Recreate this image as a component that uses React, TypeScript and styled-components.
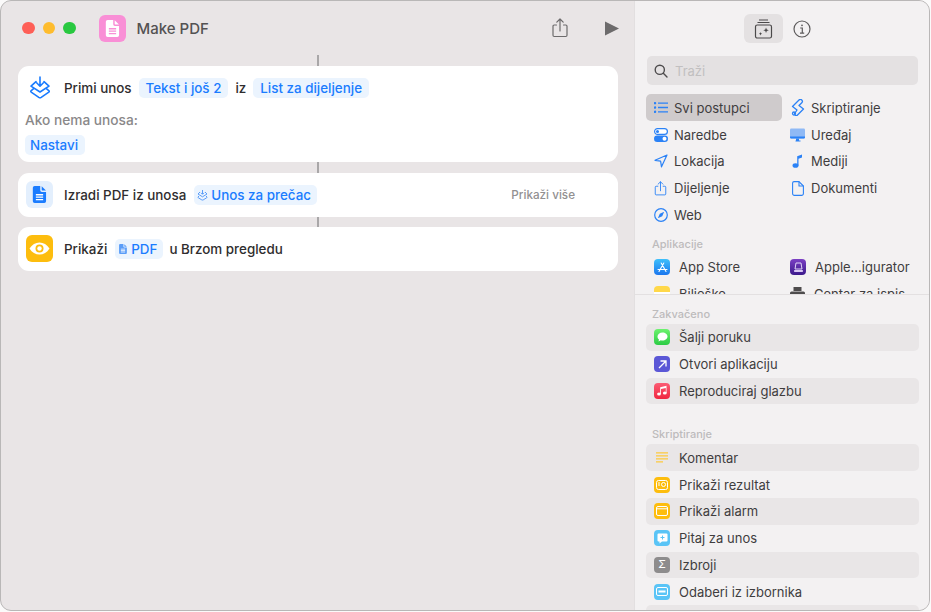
import React from 'react';
import styled, { createGlobalStyle } from 'styled-components';

const GlobalStyle = createGlobalStyle`
  html, body {
    margin: 0;
    padding: 0;
    width: 931px;
    height: 612px;
    overflow: hidden;
    background: #fbfafa;
  }
  * { box-sizing: border-box; }
`;

const Window = styled.div`
  width: 930px;
  height: 611px;
  display: flex;
  overflow: hidden;
  border: 1px solid #b9b7b7;
  border-radius: 11px;
  background: #e9e5e6;
  font-family: Inter, "Liberation Sans", sans-serif;
  font-size: 13px;
  color: #3f3d3e;
`;

const Editor = styled.main`
  width: 633px;
  flex: none;
  display: flex;
  flex-direction: column;
`;

const TitleBar = styled.header`
  height: 54px;
  flex: none;
  display: flex;
  align-items: center;
  padding: 0 15px 0 21px;
`;

const Light = styled.span<{ $color: string }>`
  width: 12.5px;
  height: 12.5px;
  margin-right: 8px;
  border-radius: 50%;
  background: ${p => p.$color};
`;

const AppIcon = styled.span`
  width: 27px;
  height: 27px;
  margin-left: 15px;
  border-radius: 6px;
  background: #f98fd6;
  display: flex;
  align-items: center;
  justify-content: center;
`;

const Title = styled.h1`
  margin: 0 0 0 11px;
  font-size: 15px;
  font-weight: 500;
  color: #545253;
`;

const ToolIcon = styled.span<{ $left?: number }>`
  display: flex;
  margin-left: ${p => (p.$left === undefined ? 'auto' : `${p.$left}px`)};
`;

const Canvas = styled.div`
  width: 600px;
  margin-left: 17px;
  display: flex;
  flex-direction: column;
  align-items: center;
`;

const Connector = styled.span<{ $h: number }>`
  width: 2px;
  height: ${p => p.$h}px;
  background: #a9a7a8;
`;

const Card = styled.section<{ $bottom?: number }>`
  width: 100%;
  background: #fff;
  border-radius: 11px;
  padding: 8px 8px ${p => p.$bottom ?? 8}px;
`;

const CardLine = styled.div`
  display: flex;
  align-items: center;
  height: 28px;
  padding-bottom: 1px;
  font-size: 13.4px;
  font-weight: 500;
  color: #2f2d2e;
`;

const ActionTile = styled.span<{ $bg: string }>`
  width: 27px;
  height: 27px;
  flex: none;
  margin-right: 11px;
  border-radius: 6px;
  background: ${p => p.$bg};
  display: flex;
  align-items: center;
  justify-content: center;
`;

const Pill = styled.span<{ $left: number; $right?: number }>`
  display: flex;
  width: fit-content;
  align-items: center;
  height: 20px;
  padding: 0 7px;
  margin-left: ${p => p.$left}px;
  margin-right: ${p => p.$right ?? 0}px;
  border-radius: 5px;
  background: #ebf4fe;
  color: #1a7cff;
  font-size: 13.4px;
  font-weight: 500;
`;

const IconPill = styled(Pill)`
  gap: 3px;
  padding: 0 6px 0 3px;
`;

const NoInputLabel = styled.div`
  margin: 10px 0 7px -1px;
  height: 16px;
  line-height: 16px;
  font-size: 13.7px;
  color: #8a8889;
  font-weight: 500;
`;

const NoInputPill = styled(Pill)`
  padding: 0 7px 0 5px;
  margin-left: -1px;
`;

const ShowMore = styled.span`
  margin-left: auto;
  margin-right: 35px;
  font-size: 11.7px;
  font-weight: 500;
  color: #929091;
`;

const Sidebar = styled.aside`
  flex: 1;
  display: flex;
  flex-direction: column;
  background: #f3f1f2;
  border-left: 1px solid #e2dfe0;
`;

const BrowseArea = styled.div`
  height: 294px;
  flex: none;
  overflow: hidden;
  padding: 0 9px 0 11px;
  border-bottom: 1px solid #e3e0e1;
`;

const SideTabs = styled.div`
  height: 55px;
  display: flex;
  align-items: center;
  justify-content: center;
  gap: 9px;
  padding-right: 10px;
`;

const SideTab = styled.span<{ $active?: boolean }>`
  width: ${p => (p.$active ? '39px' : '20px')};
  height: 29px;
  border-radius: 6px;
  background: ${p => (p.$active ? '#e4e1e2' : 'transparent')};
  display: flex;
  align-items: center;
  justify-content: center;
`;

const Search = styled.div`
  height: 29px;
  width: 271px;
  margin-left: 1px;
  border-radius: 5px;
  background: #e4e1e2;
  display: flex;
  align-items: center;
  gap: 7px;
  padding-left: 7px;
  color: #c1bfc0;
`;

const CategoryGrid = styled.div`
  margin-top: 9px;
  display: grid;
  grid-template-columns: 136px 1fr;
  column-gap: 1px;
  grid-auto-rows: 26.8px;
`;

const Category = styled.div<{ $active?: boolean }>`
  display: flex;
  align-items: center;
  gap: 6px;
  padding: 1px 0 0 7px;
  border-radius: 5px;
  background: ${p => (p.$active ? '#cfcbcc' : 'transparent')};
`;

const GlyphBox = styled.span`
  width: 15px;
  height: 15px;
  flex: none;
  display: flex;
  align-items: center;
  justify-content: center;
`;

const SectionLabel = styled.div<{ $top: number }>`
  margin: ${p => p.$top}px 0 0 6px;
  height: 14px;
  line-height: 14px;
  font-size: 11px;
  font-weight: 500;
  color: #bdbbbc;
`;

const AppGrid = styled.div`
  margin-top: 3px;
  display: grid;
  grid-template-columns: 135px 1fr;
  column-gap: 1px;
  grid-auto-rows: 26.8px;
`;

const AppRow = styled.div`
  display: flex;
  align-items: center;
  gap: 9px;
  padding-left: 8px;
`;

const PinnedArea = styled.div`
  flex: 1;
  min-height: 0;
  overflow: hidden;
  padding: 12px 9px 0 11px;
`;

const ActionList = styled.div<{ $bottom?: number }>`
  margin-top: 3px;
  margin-bottom: ${p => p.$bottom ?? 0}px;
`;

const ActionRow = styled.div<{ $striped?: boolean }>`
  height: 26.8px;
  width: 273px;
  display: flex;
  align-items: center;
  gap: 9px;
  padding-left: 8px;
  border-radius: 5px;
  background: ${p => (p.$striped ? '#e9e6e7' : 'transparent')};
`;

const Tile = styled.span<{ $bg: string }>`
  width: 16px;
  height: 16px;
  flex: none;
  border-radius: 4px;
  background: ${p => p.$bg};
  display: flex;
  align-items: center;
  justify-content: center;
`;

const BLUE = '#2b82f6';

const DocGlyph = ({ size = 14, color = '#fff', ink = '#f98fd6' }: { size?: number; color?: string; ink?: string }) => (
  <svg width={size} height={size} viewBox="0 0 14 14">
    <path d="M3 0h4.600v3.600a1.400 1.400 0 0 0 1.400 1.400h3.400v7.500A1.500 1.500 0 0 1 10.900 14H3a1.500 1.500 0 0 1-1.500-1.500v-11A1.500 1.500 0 0 1 3 0z" fill={color} />
    <path d="M8.800 0.300 12.300 3.800H9.600a.8.800 0 0 1-.8-.8z" fill={color} />
    <path d="M4 7.200h6M4 9.200h6M4 11.200h6" stroke={ink} strokeWidth="1.100" />
  </svg>
);

const InputGlyph = () => (
  <svg width="22" height="24" viewBox="0 0 22 24" fill="none" stroke="#1a7cff" strokeWidth="1.600" strokeLinejoin="round" strokeLinecap="round">
    <path d="M11 1v9M7.600 6.800 11 10.200l3.400-3.400" />
    <path d="M7 5.600 2 10.200l9 5.800 9-5.800-5-4.600" />
    <path d="M4.600 12.600 2 14.800c-.4.500-.3 1 .2 1.400l7.600 5.200c.8.500 1.600.500 2.400 0l7.600-5.200c.5-.4.600-.9.200-1.400l-2.600-2.200" />
  </svg>
);

const ShareGlyph = ({ size = 20, color = '#6d6b6c' }: { size?: number; color?: string }) => (
  <svg width={size} height={size} viewBox="0 0 20 20" fill="none" stroke={color} strokeWidth="1.200" strokeLinecap="round" strokeLinejoin="round">
    <path d="M6.500 7H4.200A1.200 1.200 0 0 0 3 8.200v9.100a1.200 1.200 0 0 0 1.200 1.200h11.600a1.200 1.200 0 0 0 1.200-1.200V8.200A1.200 1.200 0 0 0 15.800 7h-2.300" />
    <path d="M10 13V1.200M6.800 4.200 10 1l3.200 3.200" />
  </svg>
);

const EyeGlyph = () => (
  <svg width="21" height="13" viewBox="0 0 21 13">
    <path d="M.5 6.500C3 2.500 6.500.5 10.500.5s7.500 2 10 6c-2.500 4-6 6-10 6s-7.500-2-10-6z" fill="#fff" />
    <circle cx="10.500" cy="6.500" r="4" fill="#fdbd0e" />
    <circle cx="10.500" cy="6.500" r="2.200" fill="#fff" />
  </svg>
);

const ShortcutGlyph = () => (
  <svg width="11" height="12" viewBox="0 0 11 12" fill="none" stroke="#5a9df8" strokeWidth="1" strokeLinejoin="round">
    <path d="M5.500 1v4M4 3.800l1.500 1.500L7 3.800" />
    <path d="M3 3 1 5l4.500 2.800L10 5 8 3" />
    <path d="M2 7 1 8c-.2.300 0 .5.200.7l3.600 2.200c.5.200.9.200 1.400 0l3.600-2.200c.2-.2.4-.4.200-.7L9 7" />
  </svg>
);

const TabLibraryGlyph = () => (
  <svg width="19" height="20" viewBox="0 0 19 20" fill="none" stroke="#4b494a" strokeWidth="1.200">
    <path d="M5 1h9" />
    <path d="M3.500 3.500h12" />
    <rect x="1.500" y="6" width="16" height="13" rx="1.800" />
    <path d="M12 8.500l.8 2 2 .7-2 .8-.8 2-.7-2-2-.8 2-.7zM6.500 13l.5 1.200 1.200.5-1.200.5-.5 1.200-.5-1.200-1.200-.5 1.200-.5z" fill="#4b494a" stroke="none" />
  </svg>
);

const InfoGlyph = () => (
  <svg width="18" height="18" viewBox="0 0 18 18" fill="none" stroke="#5c5a5b" strokeWidth="1.200">
    <circle cx="9" cy="9" r="8" />
    <circle cx="9" cy="5.300" r=".9" fill="#5c5a5b" stroke="none" />
    <path d="M7.200 8h2.100v5M7 13.200h4.200" />
  </svg>
);

const SearchGlyph = () => (
  <svg width="14" height="14" viewBox="0 0 14 14" fill="none" stroke="#4e4c4d" strokeWidth="1.400" strokeLinecap="round">
    <circle cx="5.800" cy="5.800" r="4.600" />
    <path d="M9.300 9.300 13 13" />
  </svg>
);

const ListGlyph = () => (
  <svg width="14" height="11" viewBox="0 0 14 11" stroke={BLUE} strokeWidth="1.300" fill={BLUE}>
    <path d="M4 1.200h10M4 5.500h10M4 9.800h10" fill="none" />
    <circle cx="1" cy="1.200" r=".6" /><circle cx="1" cy="5.500" r=".6" /><circle cx="1" cy="9.800" r=".6" />
  </svg>
);

const ScriptGlyph = () => (
  <svg width="14" height="17" viewBox="0 0 14 17" fill="none" stroke={BLUE} strokeWidth="1.300" strokeLinejoin="round">
    <path d="M8 1 1.500 7.500 6 11l-2 3a1.500 1.500 0 0 0 2.500 2L12.500 10 8 6.500l2.800-2.800A1.700 1.700 0 0 0 8 1z" />
    <circle cx="3" cy="14.500" r="1.500" />
  </svg>
);

const SwitchGlyph = () => (
  <svg width="14" height="14" viewBox="0 0 14 14">
    <rect x="0.600" y="0.600" width="12.800" height="5.800" rx="2.900" fill="#fff" stroke={BLUE} strokeWidth="1.200" />
    <circle cx="3.500" cy="3.500" r="1.500" fill={BLUE} />
    <rect y="7.500" width="14" height="6.500" rx="3.250" fill={BLUE} />
    <circle cx="10.500" cy="10.750" r="2" fill="#fff" />
  </svg>
);

const MonitorGlyph = () => (
  <svg width="15" height="14" viewBox="0 0 15 14">
    <rect y="0.500" width="15" height="10" rx="1.200" fill="#8fb9f5" />
    <path d="M0 8.500h15v1a1.200 1.200 0 0 1-1.200 1H1.200A1.200 1.200 0 0 1 0 9.500z" fill={BLUE} />
    <path d="M6 10.500h3v2h1.500v1h-5v-1H6z" fill={BLUE} />
  </svg>
);

const LocationGlyph = () => (
  <svg width="14" height="14" viewBox="0 0 14 14" fill="none" stroke={BLUE} strokeWidth="1.200" strokeLinejoin="round">
    <path d="M13 1 1 6.300l5.600.8.900 5.700z" />
  </svg>
);

const NoteGlyph = () => (
  <svg width="11" height="14" viewBox="0 0 11 14" fill={BLUE}>
    <ellipse cx="3.500" cy="11.500" rx="3" ry="2.300" />
    <path d="M5.200 11.500V2.300L10 .5v3L6.500 4.800v6.700z" />
  </svg>
);

const PageGlyph = () => (
  <svg width="12" height="15" viewBox="0 0 12 15" fill="none" stroke={BLUE} strokeWidth="1.100" strokeLinejoin="round">
    <path d="M2 .6h5l4.400 4.400v7.600a1.800 1.800 0 0 1-1.800 1.800H2.400a1.800 1.800 0 0 1-1.800-1.800V2A1.500 1.500 0 0 1 2 .6z" />
    <path d="M7 .6V5h4.400" />
  </svg>
);

const CompassGlyph = () => (
  <svg width="14" height="14" viewBox="0 0 14 14">
    <circle cx="7" cy="7" r="6.300" fill="none" stroke={BLUE} strokeWidth="1.200" />
    <path d="M10.200 3.800 8.200 8.200 3.800 10.200 5.800 5.800z" fill={BLUE} />
  </svg>
);

const AppStoreGlyph = () => (
  <svg width="11" height="11" viewBox="0 0 11 11" fill="none" stroke="#fff" strokeWidth="1.100" strokeLinecap="round">
    <path d="M6.800 1 2 9.500M4.200 1 9 9.500M1 7.500h9" />
  </svg>
);

const ConfiguratorGlyph = () => (
  <svg width="11" height="11" viewBox="0 0 11 11" fill="#d9c8f5">
    <path d="M3 1h5l1 6H2z" fill="none" stroke="#e2d6f7" strokeWidth="1" />
    <rect x="1" y="8" width="9" height="2" rx=".7" />
  </svg>
);

const PrinterGlyph = () => (
  <svg width="15" height="15" viewBox="0 0 15 15" fill="#4e4c4d">
    <rect x="3.500" y="0" width="8" height="4" />
    <rect x="0" y="4.500" width="15" height="7" rx="1.500" />
  </svg>
);

const BubbleGlyph = () => (
  <svg width="11" height="10" viewBox="0 0 11 10" fill="#fff">
    <path d="M5.500.5C8.300.5 10.500 2.200 10.500 4.500S8.300 8.500 5.500 8.500c-.6 0-1.200-.1-1.700-.2L1.500 9.500l.5-2C1 6.800.5 5.700.5 4.500.5 2.200 2.700.5 5.500.5z" />
  </svg>
);

const ArrowGlyph = () => (
  <svg width="9" height="9" viewBox="0 0 9 9" fill="none" stroke="#fff" strokeWidth="1.300">
    <path d="M1 8 8 1M2.500 1H8v5.500" />
  </svg>
);

const MusicGlyph = () => (
  <svg width="10" height="11" viewBox="0 0 10 11" fill="#fff">
    <ellipse cx="2" cy="9" rx="1.900" ry="1.500" />
    <ellipse cx="7.800" cy="8" rx="1.900" ry="1.500" />
    <path d="M3.200 9V2.200L9.500.8V8H8.800V3L4 4v5z" />
  </svg>
);

const CommentGlyph = () => (
  <svg width="12" height="11" viewBox="0 0 12 11" stroke="#fdc93f" strokeWidth="1.200">
    <path d="M0 .8h12M0 3.800h12M0 6.800h12M0 9.800h7" />
  </svg>
);

const ResultGlyph = () => (
  <svg width="12" height="10" viewBox="0 0 12 10" fill="none" stroke="#fff" strokeWidth="1">
    <rect x=".5" y=".5" width="11" height="9" rx="2" />
    <circle cx="7.500" cy="4.500" r="2" />
    <path d="M2 3h2M2 5h2" />
  </svg>
);

const AlarmGlyph = () => (
  <svg width="12" height="10" viewBox="0 0 12 10" fill="none" stroke="#fff" strokeWidth="1">
    <rect x=".5" y=".5" width="11" height="9" rx="1.500" />
    <path d="M.5 2.800h11" />
  </svg>
);

const AskGlyph = () => (
  <svg width="11" height="11" viewBox="0 0 11 11">
    <path d="M1.500.5h8a1 1 0 0 1 1 1v6a1 1 0 0 1-1 1H5L2.500 10.500V8.500h-1a1 1 0 0 1-1-1v-6a1 1 0 0 1 1-1z" fill="#fff" />
    <path d="M5.500 2.500v4M3.500 4.500h4" stroke="#5ac4f6" strokeWidth="1" />
  </svg>
);

const MenuGlyph = () => (
  <svg width="12" height="9" viewBox="0 0 12 9" fill="none" stroke="#fff" strokeWidth="1">
    <rect x=".5" y=".5" width="11" height="8" rx="1.500" />
    <rect x="2.500" y="3.500" width="7" height="2" fill="#fff" stroke="none" />
  </svg>
);

const Sigma = styled.span`
  color: #fff;
  font-size: 11px;
  line-height: 1;
`;

const categories: { label: string; icon: React.ReactNode; active?: boolean }[] = [
  { label: 'Svi postupci', icon: <ListGlyph />, active: true },
  { label: 'Skriptiranje', icon: <ScriptGlyph /> },
  { label: 'Naredbe', icon: <SwitchGlyph /> },
  { label: 'Uređaj', icon: <MonitorGlyph /> },
  { label: 'Lokacija', icon: <LocationGlyph /> },
  { label: 'Mediji', icon: <NoteGlyph /> },
  { label: 'Dijeljenje', icon: <ShareGlyph size={15} color={BLUE} /> },
  { label: 'Dokumenti', icon: <PageGlyph /> },
  { label: 'Web', icon: <CompassGlyph /> },
];

const pinned = [
  { label: 'Šalji poruku', bg: 'linear-gradient(#6df26f, #2ccb44)', icon: <BubbleGlyph /> },
  { label: 'Otvori aplikaciju', bg: '#5b57d6', icon: <ArrowGlyph /> },
  { label: 'Reproduciraj glazbu', bg: 'linear-gradient(#fb5c74, #f0263f)', icon: <MusicGlyph /> },
];

const scripting = [
  { label: 'Komentar', bg: 'transparent', icon: <CommentGlyph /> },
  { label: 'Prikaži rezultat', bg: '#fdbd0e', icon: <ResultGlyph /> },
  { label: 'Prikaži alarm', bg: '#fdbd0e', icon: <AlarmGlyph /> },
  { label: 'Pitaj za unos', bg: '#5ac4f6', icon: <AskGlyph /> },
  { label: 'Izbroji', bg: '#8e8c8d', icon: <Sigma>Σ</Sigma> },
  { label: 'Odaberi iz izbornika', bg: '#5ac4f6', icon: <MenuGlyph /> },
  { label: '', bg: 'transparent', icon: null },
];

const App: React.FC = () => (
  <>
    <GlobalStyle />
    <Window>
      <Editor>
        <TitleBar>
          <Light $color="#fe5f57" />
          <Light $color="#febc2e" />
          <Light $color="#29c840" />
          <AppIcon><DocGlyph size={17} /></AppIcon>
          <Title>Make PDF</Title>
          <ToolIcon><ShareGlyph /></ToolIcon>
          <ToolIcon $left={35}>
            <svg width="14" height="15" viewBox="0 0 14 15"><path d="M0 .5 14 7.500 0 14.500z" fill="#6d6b6c" /></svg>
          </ToolIcon>
        </TitleBar>
        <Canvas>
          <Connector $h={11} />
          <Card $bottom={7}>
            <CardLine>
              <ActionTile $bg="transparent"><InputGlyph /></ActionTile>
              Primi unos
              <Pill $left={7} $right={7}>Tekst i još 2</Pill>
              iz
              <Pill $left={7}>List za dijeljenje</Pill>
            </CardLine>
            <NoInputLabel>Ako nema unosa:</NoInputLabel>
            <NoInputPill $left={0}>Nastavi</NoInputPill>
          </Card>
          <Connector $h={11} />
          <Card>
            <CardLine>
              <ActionTile $bg="#e3effd"><DocGlyph size={17} color="#1a7cff" ink="#fff" /></ActionTile>
              Izradi PDF iz unosa
              <IconPill $left={8}><ShortcutGlyph />Unos za prečac</IconPill>
              <ShowMore>Prikaži više</ShowMore>
            </CardLine>
          </Card>
          <Connector $h={10} />
          <Card>
            <CardLine>
              <ActionTile $bg="#fdbd0e"><EyeGlyph /></ActionTile>
              Prikaži
              <IconPill $left={8} $right={6}><DocGlyph size={10} color="#5a9df8" ink="#fff" />PDF</IconPill>
              u Brzom pregledu
            </CardLine>
          </Card>
        </Canvas>
      </Editor>
      <Sidebar>
        <BrowseArea>
          <SideTabs>
            <SideTab $active><TabLibraryGlyph /></SideTab>
            <SideTab><InfoGlyph /></SideTab>
          </SideTabs>
          <Search><SearchGlyph />Traži</Search>
          <CategoryGrid>
            {categories.map(c => (
              <Category key={c.label} $active={c.active}>
                <GlyphBox>{c.icon}</GlyphBox>
                {c.label}
              </Category>
            ))}
          </CategoryGrid>
          <SectionLabel $top={9}>Aplikacije</SectionLabel>
          <AppGrid>
            <AppRow><Tile $bg="linear-gradient(#3fc0fb, #1b76ee)"><AppStoreGlyph /></Tile>App Store</AppRow>
            <AppRow><Tile $bg="linear-gradient(#7b3fc4, #3c1a8c)"><ConfiguratorGlyph /></Tile>Apple...igurator</AppRow>
            <AppRow><Tile $bg="linear-gradient(#ffd84a 0 40%, #fff 40%)" />Bilješke</AppRow>
            <AppRow><GlyphBox><PrinterGlyph /></GlyphBox>Centar za ispis</AppRow>
          </AppGrid>
        </BrowseArea>
        <PinnedArea>
          <SectionLabel $top={0}>Zakvačeno</SectionLabel>
          <ActionList $bottom={23}>
            {pinned.map((r, i) => (
              <ActionRow key={r.label} $striped={i % 2 === 0}>
                <Tile $bg={r.bg}>{r.icon}</Tile>
                {r.label}
              </ActionRow>
            ))}
          </ActionList>
          <SectionLabel $top={0}>Skriptiranje</SectionLabel>
          <ActionList>
            {scripting.map((r, i) => (
              <ActionRow key={i} $striped={i % 2 === 0}>
                <Tile $bg={r.bg}>{r.icon}</Tile>
                {r.label}
              </ActionRow>
            ))}
          </ActionList>
        </PinnedArea>
      </Sidebar>
    </Window>
  </>
);

export default App;
